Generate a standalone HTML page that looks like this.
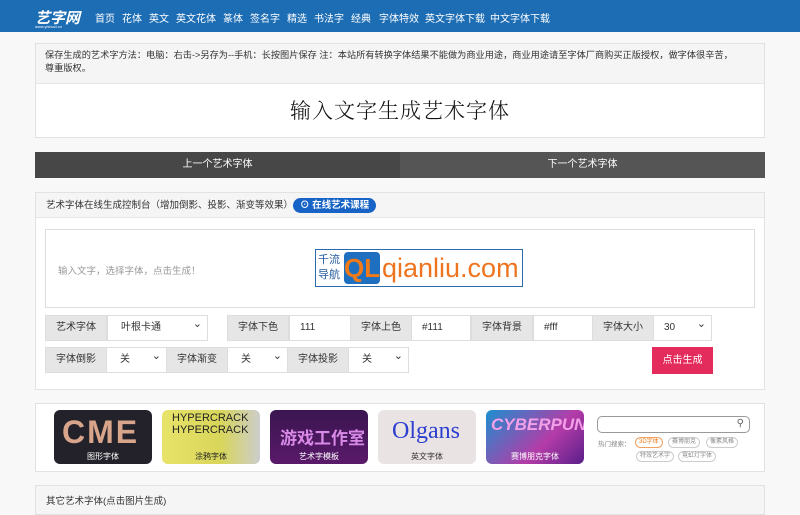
<!DOCTYPE html>
<html><head><meta charset="utf-8"><style>
*{box-sizing:border-box;margin:0;padding:0}
body{width:800px;height:505px;overflow:hidden;background:#f8f8f8;font-family:"Liberation Sans","Noto Sans CJK SC",sans-serif;font-size:10px;color:#333;position:relative}
.a{position:absolute}
.nav{left:0;top:0;width:800px;height:32px;background:#1d6db4}
.nav span{position:absolute;top:10px;color:#fff;font-size:10px}
.lbl{background:#e6e6e6;border:1px solid #ddd;text-align:center;line-height:24px;font-size:10px;color:#333}
.inp{background:#fff;border:1px solid #ddd;line-height:24px;padding-left:10px;font-size:10px}
.sel::after{content:"⌄";position:absolute;right:5px;top:-4px;font-size:11px}
.card{top:410px;width:98px;height:54px;border-radius:6px;overflow:hidden}
.card b{position:absolute;bottom:2px;left:0;width:100%;text-align:center;color:#fff;font-weight:normal;font-size:8px}
.tag{position:absolute;height:11px;border:1px solid #ccc;border-radius:6px;font-size:6px;line-height:9px;padding:0 3px;color:#888;background:#fff}
</style></head><body>
<div class="a nav">
<span style="left:35px;top:7px;font-size:15px;font-weight:bold;font-style:italic">艺字网</span>
<span style="left:35px;top:24px;font-size:4px">www.yishuzi.cn</span>
<span style="left:95px">首页</span><span style="left:122px">花体</span><span style="left:149px">英文</span><span style="left:176px">英文花体</span><span style="left:223px">篆体</span><span style="left:250px">签名字</span><span style="left:287px">精选</span><span style="left:314px">书法字</span><span style="left:351px">经典</span><span style="left:379px">字体特效</span><span style="left:425px">英文字体下载</span><span style="left:490px">中文字体下载</span>
</div>
<div class="a" style="left:35px;top:43px;width:730px;height:95px;border:1px solid #e2e2e2;background:#fff">
<div style="background:#f5f5f5;height:40px;padding:5px 9px;line-height:13px;font-size:9.2px;border-bottom:1px solid #e6e6e6;white-space:nowrap">保存生成的艺术字方法：电脑：右击->另存为--手机：长按图片保存 注：本站所有转换字体结果不能做为商业用途，商业用途请至字体厂商购买正版授权，做字体很辛苦，<br>尊重版权。</div>
<div style="text-align:center;font-size:21px;line-height:52px;font-family:'Noto Serif CJK SC',serif;font-weight:300;color:#111;letter-spacing:1px">输入文字生成艺术字体</div>
</div>
<div class="a" style="left:35px;top:152px;width:365px;height:26px;background:#474747;color:#fff;text-align:center;line-height:26px">上一个艺术字体</div>
<div class="a" style="left:400px;top:152px;width:365px;height:26px;background:#555;color:#fff;text-align:center;line-height:26px">下一个艺术字体</div>
<div class="a" style="left:35px;top:192px;width:730px;height:198px;border:1px solid #e2e2e2;background:#fff">
<div style="background:#f5f5f5;height:25px;border-bottom:1px solid #e6e6e6;padding-left:10px;line-height:25px;font-size:9.5px">艺术字体在线生成控制台（增加倒影、投影、渐变等效果）<span style="display:inline-block;background:#1763c6;color:#fff;border-radius:8px;padding:0 7px;line-height:15px;font-weight:bold;font-size:9.5px">⊙ 在线艺术课程</span></div>
</div>
<div class="a" style="left:45px;top:229px;width:710px;height:79px;border:1px solid #ddd;background:#fff">
<div class="a" style="left:12px;top:33px;color:#999;font-size:9.5px">输入文字，选择字体，点击生成！</div>
<div class="a" style="left:269px;top:19px;width:208px;height:38px;border:1px solid #2a6bb0;background:#fff">
<div class="a" style="left:2px;top:3px;font-size:11px;line-height:15px;color:#245a9e">千流<br>导航</div>
<div class="a" style="left:28px;top:2px;width:36px;height:32px;background:#1e6fbf;border-radius:4px;color:#f07a18;font-size:26px;font-weight:bold;line-height:32px;text-align:center">QL</div>
<div class="a" style="left:66px;top:0;font-size:27px;color:#ee7420;line-height:36px">qianliu.com</div>
</div>
</div>
<div class="a lbl" style="left:45px;top:315px;width:62px;height:26px">艺术字体</div>
<div class="a inp sel" style="left:107px;top:315px;width:101px;height:26px;padding-left:13px">叶根卡通</div>
<div class="a lbl" style="left:227px;top:315px;width:62px;height:26px">字体下色</div>
<div class="a inp" style="left:289px;top:315px;width:62px;height:26px">111</div>
<div class="a lbl" style="left:350px;top:315px;width:62px;height:26px">字体上色</div>
<div class="a inp" style="left:411px;top:315px;width:60px;height:26px">#111</div>
<div class="a lbl" style="left:471px;top:315px;width:62px;height:26px">字体背景</div>
<div class="a inp" style="left:533px;top:315px;width:60px;height:26px">#fff</div>
<div class="a lbl" style="left:592px;top:315px;width:62px;height:26px">字体大小</div>
<div class="a inp sel" style="left:653px;top:315px;width:59px;height:26px">30</div>
<div class="a lbl" style="left:45px;top:347px;width:62px;height:26px">字体倒影</div>
<div class="a inp sel" style="left:106px;top:347px;width:61px;height:26px;padding-left:13px">关</div>
<div class="a lbl" style="left:166px;top:347px;width:62px;height:26px">字体渐变</div>
<div class="a inp sel" style="left:227px;top:347px;width:61px;height:26px;padding-left:13px">关</div>
<div class="a lbl" style="left:287px;top:347px;width:62px;height:26px">字体投影</div>
<div class="a inp sel" style="left:348px;top:347px;width:61px;height:26px;padding-left:13px">关</div>
<div class="a" style="left:652px;top:347px;width:61px;height:27px;background:#e42c5c;color:#fff;text-align:center;line-height:27px">点击生成</div>
<div class="a" style="left:35px;top:403px;width:730px;height:69px;border:1px solid #e2e2e2;background:#fff"></div>
<div class="a card" style="left:54px;background:#23222b"><div class="a" style="left:8px;top:4px;font-size:32px;font-weight:bold;color:#d9a58a;letter-spacing:2px">CME</div><b>图形字体</b></div>
<div class="a card" style="left:162px;background:linear-gradient(90deg,#e8e36a,#d8d65a 60%,#ccc)"><div class="a" style="left:10px;top:2px;font-size:11px;color:#222;line-height:12px">HYPERCRACK<br>HYPERCRACK</div><b style="color:#222">涂鸦字体</b></div>
<div class="a card" style="left:270px;background:linear-gradient(#3a1550,#5a1a6a)"><div class="a" style="left:10px;top:14px;font-size:17px;font-weight:bold;color:#d98ae8">游戏工作室</div><b>艺术字模板</b></div>
<div class="a card" style="left:378px;background:#e9e3e3"><div class="a" style="left:14px;top:8px;font-size:24px;color:#2c3fd0;font-family:'Liberation Serif',serif">Olgans</div><b style="color:#333">英文字体</b></div>
<div class="a card" style="left:486px;background:linear-gradient(135deg,#1c8fd0,#b43ca8 60%,#5a1f8a)"><div class="a" style="left:5px;top:5px;font-size:17px;font-weight:bold;font-style:italic;color:#f3a0e8">CYBERPUNK</div><b>赛博朋克字体</b></div>
<div class="a" style="left:597px;top:416px;width:153px;height:17px;border:1px solid #999;border-radius:5px;background:#fff"><span class="a" style="right:5px;top:1px;font-size:10px;color:#666">⚲</span></div>
<div class="a" style="left:598px;top:438px;font-size:6.5px;color:#888">热门搜索：</div>
<span class="tag" style="left:635px;top:437px;color:#f07a18;border-color:#f0a060">3D字体</span>
<span class="tag" style="left:668px;top:437px">赛博朋克</span>
<span class="tag" style="left:706px;top:437px">像素风格</span>
<span class="tag" style="left:636px;top:451px">特效艺术字</span>
<span class="tag" style="left:678px;top:451px">霓虹灯字体</span>
<div class="a" style="left:35px;top:485px;width:730px;height:30px;border:1px solid #e2e2e2;background:#f5f5f5;padding:7px 10px;font-size:9.5px">其它艺术字体(点击图片生成)</div>
</body></html>
